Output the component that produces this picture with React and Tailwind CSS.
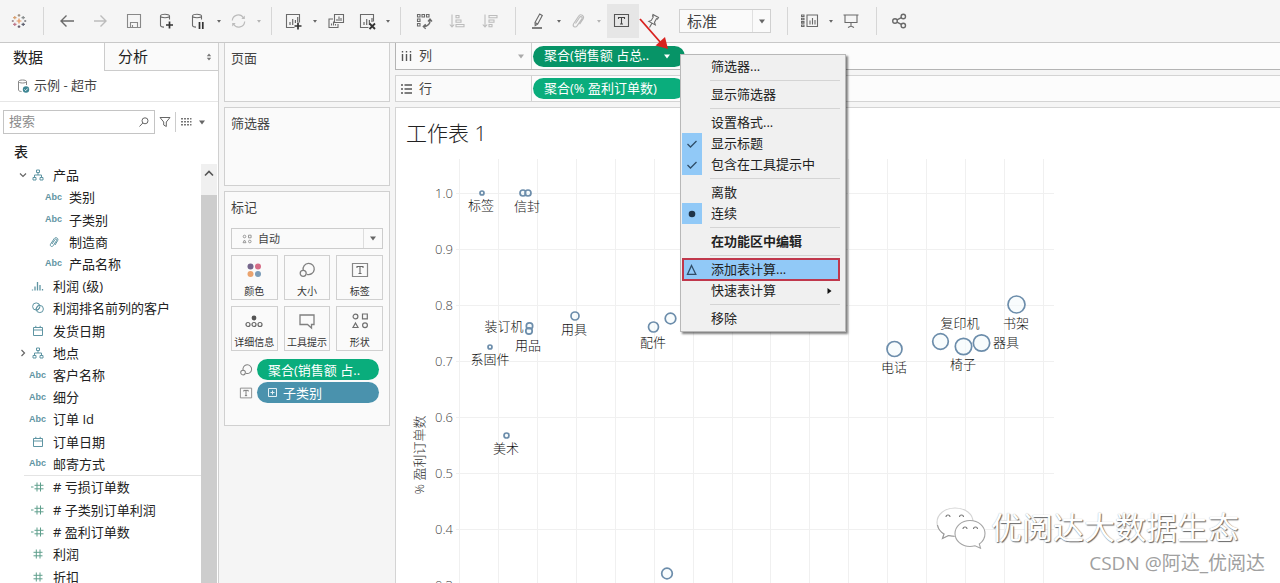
import React from "react";

/* ---------- small shared pieces ---------- */

function Caret({ className = "text-[#666]" }) {
  return (
    <svg viewBox="0 0 8 5" className={`h-[5px] w-2 shrink-0 ${className}`} aria-hidden="true">
      <path d="M1 0.5h6L4 4.5z" fill="currentColor" />
    </svg>
  );
}

function SmallCaret({ dim }) {
  return (
    <svg viewBox="0 0 8 5" className="h-[5px] w-2 shrink-0" aria-hidden="true">
      <path d="M2 1h4L4 3.8z" fill={dim ? "#b4b4b4" : "#666"} />
    </svg>
  );
}

function Icon({ children, dim }) {
  return (
    <svg
      viewBox="0 0 20 20"
      className="size-5 shrink-0"
      fill="none"
      stroke={dim ? "#bcbcbc" : "#6a6a6a"}
      strokeWidth="1.1"
      aria-hidden="true"
    >
      {children}
    </svg>
  );
}

function Tool({ label, children, dim }) {
  return (
    <button type="button" aria-label={label} className="flex h-8 w-[33px] shrink-0 items-center justify-center">
      <Icon dim={dim}>{children}</Icon>
    </button>
  );
}

function MenuTool({ label, children, dim }) {
  return (
    <button type="button" aria-label={label} className="flex h-8 w-10 shrink-0 items-center justify-between pl-1.5">
      <Icon dim={dim}>{children}</Icon>
      <SmallCaret dim={dim} />
    </button>
  );
}

function Divider({ className = "" }) {
  return (
    <span className={`flex w-4 shrink-0 justify-center ${className}`}>
      <span className="h-7 w-px bg-[#d6d6d6]" />
    </span>
  );
}

/* ---------- toolbar ---------- */

function Cross({ x, y, s, color }) {
  return <path d={`M${x - s} ${y}h${2 * s}M${x} ${y - s}v${2 * s}`} stroke={color} strokeWidth="1.2" />;
}

function Bars() {
  return <path d="M6 14v-3M8.700 14V8M11.400 14v-5M14 11V7" strokeWidth="1.2" />;
}

function Toolbar() {
  return (
    <header className="flex h-[43px] shrink-0 items-center border-b border-[#c8c8c8] bg-[#f5f5f5] pl-0.5">
      <Tool label="Tableau">
        <Cross x={10} y={10} s={2.4} color="#e5935c" />
        <Cross x={5.8} y={6.6} s={1.7} color="#d8a070" />
        <Cross x={14.2} y={6.6} s={1.7} color="#8a8f90" />
        <Cross x={5.8} y={13.4} s={1.7} color="#c0788a" />
        <Cross x={14.2} y={13.4} s={1.7} color="#5e6070" />
        <Cross x={10} y={4.4} s={1.3} color="#a09080" />
        <Cross x={10} y={15.600} s={1.3} color="#6c6070" />
        <Cross x={3.800} y={10} s={1.1} color="#a08a90" />
        <Cross x={16.200} y={10} s={1.1} color="#85858a" />
      </Tool>
      <Divider />
      <Tool label="后退">
        <path d="M16 10H3.500M8.500 4.500 3 10l5.500 5.500" strokeWidth="1.400" />
      </Tool>
      <Tool label="前进" dim>
        <path d="M3 10h12M9.500 4.500 15 10l-5.500 5.500" strokeWidth="1.400" />
      </Tool>
      <Tool label="保存">
        <path d="M3.500 3.500h13v13h-13zM6.500 16.500v-5h7v5M8.500 16.500v-2.500" stroke="#888" />
      </Tool>
      <Tool label="新建数据源">
        <path d="M12.500 8.500V5c0-1-2-1.700-4.500-1.700S3.500 4 3.500 5v9.500c0 1 1.500 1.500 3.500 1.600M3.500 5c0 1 2 1.700 4.500 1.700S12.500 6 12.500 5" />
        <path d="M9 14h7M12.500 10.500v7" stroke="#333" strokeWidth="1.700" />
      </Tool>
      <MenuTool label="暂停自动更新">
        <path d="M12.500 8.500V5c0-1-2-1.700-4.500-1.700S3.500 4 3.500 5v9.500c0 1 1.500 1.500 3.500 1.600M3.500 5c0 1 2 1.700 4.500 1.700S12.500 6 12.500 5" />
        <path d="M10.500 11v7M13.800 11v7" stroke="#333" strokeWidth="1.700" />
      </MenuTool>
      <MenuTool label="运行更新" dim>
        <path d="M3.300 9.500A6 6 0 0 1 14.500 7M15.700 10.500A6 6 0 0 1 4.500 13" strokeWidth="1.200" />
        <path d="M15.800 4.500v3.500h-3.500zM3.200 15.500V12h3.500z" fill="#bcbcbc" stroke="none" />
      </MenuTool>
      <Divider />
      <MenuTool label="新建工作表">
        <path d="M9.500 16.500h-8v-13h13v8" />
        <path d="M5 14v-3M7.700 14V8M10.400 12V9M12.700 11V6" strokeWidth="1.200" />
        <path d="M9.500 15h7M13 11.500v7" stroke="#333" strokeWidth="1.700" />
      </MenuTool>
      <Tool label="复制">
        <path d="M8.500 3.500h9v8h-9zM7 8H3v8.500h9V13" />
        <path d="M11 10V8M13 10V5.500M15 10V7M5.500 14.500v-2M7.500 14.500v-4M9.500 14.500v-1.500" />
      </Tool>
      <MenuTool label="清除工作表">
        <path d="M10.500 16.500h-8v-13h13v7" />
        <Bars />
        <path d="m11.500 12.500 5.500 5.500M17 12.500 11.500 18" stroke="#333" strokeWidth="1.800" />
      </MenuTool>
      <Divider />
      <Tool label="交换行和列">
        <path d="M2.500 3.500h2.500v2.500h-2.500zM7 3.500h2.500v2.500H7zM11.500 3.500H14v2.500h-2.500zM2.500 8h2.500v2.500h-2.500zM2.500 12.500h2.500V15h-2.500z" />
        <path d="M15 8.500c.5 4-2 7-6.500 7M13 10.500l2-2.500 2 2.500M10.700 13.200l-2.400 2.300 2.400 2.200" strokeWidth="1.300" />
      </Tool>
      <Tool label="升序排序" dim>
        <path d="M4 3.500v12.500M1.800 13.500 4 16l2.200-2.500M8 4.500h3v2.200H8zM8 9h5v2.200H8zM8 13.500h8v2.200H8z" />
      </Tool>
      <Tool label="降序排序" dim>
        <path d="M4 3.500v12.500M1.800 13.500 4 16l2.200-2.500M8 4.500h8v2.200H8zM8 9h5v2.200H8zM8 13.500h3v2.200H8z" />
      </Tool>
      <Divider />
      <MenuTool label="突出显示">
        <path d="m6 11.500 4.700-8.500 2.600 1.500-4.600 8.500-2.500 1.500zM6 11.500l2.700 1.500" />
        <path d="M3 17h10" strokeWidth="1.700" />
      </MenuTool>
      <MenuTool label="组成员" dim>
        <path d="m6.500 12.500 4.200-6.200c1-1.600 3.200-.2 2.200 1.400l-4.800 7.200c-1.800 2.400-5 .4-3.500-2.200l5-7.500c1.800-3 6.300-.4 4.500 2.700l-3.500 5.300" />
      </MenuTool>
      <button
        type="button"
        aria-label="显示标记标签"
        className="ml-1 flex h-[34px] w-8 shrink-0 items-center justify-center bg-[#e6e6e6]"
      >
        <Icon>
          <path d="M1.500 3.500h14v12h-14z" stroke="#555" />
          <path d="M5.500 8V6.500h6V8M8.500 6.500v6.500M7 13h3" stroke="#444" strokeWidth="1.100" />
        </Icon>
      </button>
      <button type="button" aria-label="固定轴" className="flex h-8 w-7 shrink-0 items-center justify-center">
        <Icon>
          <path d="m10 3.500 5.500 3-1 1.500-1-.3-2 3.500.8 2.800-6.500-3.600 2.500-1 2-3.500-.8-.9zM8.800 12.500 6.500 16.500" />
        </Icon>
      </button>
      <div className="ml-3 flex h-6 w-[92px] shrink-0 items-center border border-[#d0d0d0] bg-[#fafafa]">
        <select
          aria-label="视图适合方式"
          defaultValue="标准"
          className="h-full min-w-0 flex-1 appearance-none bg-transparent pl-[7px] text-[15px] text-[#444]"
        >
          <option>标准</option>
        </select>
        <span className="flex h-full w-[18px] items-center justify-center border-l border-[#e0e0e0]">
          <Caret />
        </span>
      </div>
      <Divider className="ml-2" />
      <MenuTool label="显示/隐藏功能区">
        <path d="M6 4h10.500v11.500H6zM9 13.500v-4M11.500 13.500V7M14 13.500V9" />
        <path d="M.5 4H3v1.500H.5zM.5 7.300H3v1.500H.5zM.5 10.600H3v1.500H.5zM.5 14H3v1.500H.5z" />
      </MenuTool>
      <Tool label="演示模式">
        <path d="M1.500 4h15M3 4v7.500h12V4M9 11.500v4M6 16.500l3-1.500 3 1.500" />
      </Tool>
      <Divider />
      <Tool label="共享">
        <circle cx="4" cy="10" r="2.300" strokeWidth="1.400" />
        <circle cx="12.300" cy="5.500" r="2.200" strokeWidth="1.400" />
        <circle cx="12.300" cy="14.500" r="2.200" strokeWidth="1.400" />
        <path d="m6 8.900 4.300-2.300M6 11.100l4.300 2.300" strokeWidth="1.300" />
      </Tool>
    </header>
  );
}

/* ---------- data pane ---------- */

function FieldIcon({ type }) {
  if (type === "abc") {
    return (
      <span className="font-['Liberation_Sans',sans-serif] text-[9px] leading-none font-bold text-[#5f95a3]">Abc</span>
    );
  }
  const paths = {
    tree: <path d="M5.500 2h3v2.500h-3zM2 9.500h3v2.500H2zM9 9.500h3v2.500H9zM7 4.500V7M3.500 9.500V7h7v2.500" />,
    clip: <path d="m5 9 3-4.500c.8-1.200 2.300-.2 1.600 1L6.200 10.700c-1.300 1.800-3.700.3-2.600-1.600l3.600-5.500c1.500-2.200 4.800-.2 3.400 2.100L8 10" />,
    hist: <path d="M1.500 11.500v-1M4 11.500v-4M6.500 11.500V3M9 11.500V6M11.500 11.500v-1.500" strokeWidth="1.300" />,
    set: (
      <>
        <circle cx="5.200" cy="5.500" r="3.600" />
        <circle cx="8.800" cy="8" r="3.600" />
        <path d="M4.500 8.500 8 3.500M6.500 9.500l2.500-3.500" />
      </>
    ),
    date: <path d="M2.500 3.500h9v8h-9zM2.500 6h9M4.800 1.800v2M9.200 1.800v2" />,
    num: <path d="M5.300 2.500v9M9 2.500v9M2.500 5.300h9M2.500 8.800h9" />,
    calc: <path d="M6 2.500v9M9.500 2.500v9M3.500 5.300h9M3.500 8.800h9M0 7h2.500" />,
  };
  const green = type === "num" || type === "calc";
  return (
    <svg
      viewBox="0 0 14 14"
      className="size-3.5"
      fill="none"
      stroke={green ? "#5f9f8c" : "#5f95a3"}
      strokeWidth="1"
      aria-hidden="true"
    >
      {paths[type]}
    </svg>
  );
}

const dimensions = [
  { name: "产品", type: "tree", arrow: "down" },
  { name: "类别", type: "abc", nested: true },
  { name: "子类别", type: "abc", nested: true },
  { name: "制造商", type: "clip", nested: true },
  { name: "产品名称", type: "abc", nested: true },
  { name: "利润 (级)", type: "hist" },
  { name: "利润排名前列的客户", type: "set" },
  { name: "发货日期", type: "date" },
  { name: "地点", type: "tree", arrow: "right" },
  { name: "客户名称", type: "abc" },
  { name: "细分", type: "abc" },
  { name: "订单 Id", type: "abc" },
  { name: "订单日期", type: "date" },
  { name: "邮寄方式", type: "abc" },
];

const measures = [
  { name: "# 亏损订单数", type: "calc" },
  { name: "# 子类别订单利润", type: "calc" },
  { name: "# 盈利订单数", type: "calc" },
  { name: "利润", type: "num" },
  { name: "折扣", type: "num" },
];

function Field({ name, type, nested, arrow }) {
  return (
    <li className={`flex items-center ${nested ? "pl-8" : "pl-4"}`}>
      <span className="flex w-3.5 justify-center">
        {arrow && (
          <svg viewBox="0 0 8 8" className="size-2" fill="none" stroke="#666" strokeWidth="1.2" aria-hidden="true">
            <path d={arrow === "down" ? "M1 2.500 4 5.500 7 2.500" : "M2.500 1 5.500 4 2.500 7"} />
          </svg>
        )}
      </span>
      <span className="flex w-[15px] justify-center">
        <FieldIcon type={type} />
      </span>
      <span className="pl-2 whitespace-nowrap">{name}</span>
    </li>
  );
}

function DataPane() {
  return (
    <aside className="flex w-[219px] shrink-0 flex-col border-r border-[#d0d0d0] bg-white">
      <div className="flex h-7 shrink-0 text-[15px] text-[#222]" role="tablist">
        <button type="button" role="tab" aria-selected="true" className="w-[104px] pl-[13px] text-left">
          数据
        </button>
        <button
          type="button"
          role="tab"
          aria-selected="false"
          className="flex flex-1 items-center justify-between border-b border-l border-[#ccc] bg-[#fafafa] pr-1.5 pl-[13px]"
        >
          分析
          <svg viewBox="0 0 6 8" className="h-2 w-1.5" fill="#777" aria-hidden="true">
            <path d="M3 0.500 5.200 3.300H.8zM3 7.500.8 4.700h4.400z" />
          </svg>
        </button>
      </div>
      <div className="flex h-[31px] shrink-0 items-center gap-1 border-b border-[#e6e6e6] pl-4 text-[13px] text-[#444]">
        <svg viewBox="0 0 14 16" className="h-4 w-3.5" fill="none" stroke="#888" aria-hidden="true">
          <path d="M10.500 7V3.500c0-.9-1.800-1.500-4-1.500s-4 .6-4 1.500v8.500c0 .8 1.200 1.400 3 1.500M2.500 3.500c0 .9 1.800 1.500 4 1.500s4-.6 4-1.500" />
          <circle cx="10" cy="11.500" r="3.200" fill="#3f8794" stroke="none" />
          <path d="m8.500 11.500 1.200 1.200 2-2.200" stroke="#fff" strokeWidth=".9" />
        </svg>
        示例 - 超市
      </div>
      <div className="mt-2 flex h-6 shrink-0 items-center pl-[3px]">
        <label className="flex h-full w-[152px] items-center border border-[#c4c4c4] pr-1 pl-[5px]">
          <input
            aria-label="搜索"
            placeholder="搜索"
            className="min-w-0 flex-1 bg-transparent text-[13px] outline-none placeholder:text-[#8c8c8c]"
          />
          <svg viewBox="0 0 12 12" className="size-3" fill="none" stroke="#666" aria-hidden="true">
            <circle cx="7" cy="4.800" r="3" />
            <path d="M4.800 7 1.500 10.500" />
          </svg>
        </label>
        <button type="button" aria-label="筛选" className="flex w-5 justify-center">
          <svg viewBox="0 0 12 12" className="size-3" fill="none" stroke="#666" aria-hidden="true">
            <path d="M1 1.500h10L7.300 6v4.500L4.700 9V6z" />
          </svg>
        </button>
        <span className="h-5 w-px bg-[#ccc]" />
        <button type="button" aria-label="视图选项" className="flex items-center gap-1.5 pl-1">
          <svg viewBox="0 0 12 12" className="size-3" fill="#777" aria-hidden="true">
            <path d="M1 2h2v1.500H1zM4 2h2v1.500H4zM7 2h2v1.500H7zM10 2h1.500v1.500H10zM1 5h2v1.500H1zM4 5h2v1.500H4zM7 5h2v1.500H7zM10 5h1.500v1.500H10zM1 8h2v1.500H1zM4 8h2v1.500H4zM7 8h2v1.500H7zM10 8h1.500v1.500H10z" />
          </svg>
          <Caret />
        </button>
      </div>
      <h2 className="mt-1.5 h-6 shrink-0 pl-3.5 text-sm leading-6 font-medium text-[#222]">表</h2>
      <div className="flex min-h-0 flex-1 overflow-hidden text-[13px] leading-5 text-[#222]">
        <div className="min-w-0 flex-1">
          <ul className="grid h-[311px] auto-rows-fr">
            {dimensions.map((f) => (
              <Field key={f.name} {...f} />
            ))}
          </ul>
          <hr className="ml-6 border-[#e4e4e4]" />
          <ul className="grid h-28 auto-rows-fr">
            {measures.map((f) => (
              <Field key={f.name} {...f} />
            ))}
          </ul>
        </div>
        <div className="mr-px flex w-4 flex-col bg-[#cdcdcd]">
          <button type="button" aria-label="向上滚动" className="flex h-[31px] justify-center bg-[#f0f0f0] pt-1.5">
            <svg viewBox="0 0 10 7" className="h-[7px] w-2.5" fill="none" stroke="#555" strokeWidth="1.600" aria-hidden="true">
              <path d="M1 5.500 5 1.500l4 4" />
            </svg>
          </button>
        </div>
      </div>
    </aside>
  );
}

/* ---------- cards ---------- */

function LabelGlyph({ className }) {
  return (
    <svg viewBox="0 0 18 16" className={className} fill="none" stroke="#888" aria-hidden="true">
      <path d="M1.500 1.500h15v13h-15z" strokeWidth="1.200" />
      <path d="M6 6V4.500h6V6M9 4.500v7M7.500 11.500h3" stroke="#666" strokeWidth="1.100" />
    </svg>
  );
}

function SizeGlyph({ className }) {
  return (
    <svg viewBox="0 0 18 18" className={className} fill="none" stroke="#808080" strokeWidth="1.300" aria-hidden="true">
      <path d="M5.200 9.200A5.600 5.600 0 1 1 9 13.300" />
      <circle cx="5.200" cy="12.300" r="3" />
    </svg>
  );
}

const markButtons = [
  {
    label: "颜色",
    icon: (
      <svg viewBox="0 0 18 18" className="size-[18px]" aria-hidden="true">
        <circle cx="5.500" cy="5.500" r="3" fill="#75668c" />
        <circle cx="13" cy="5.500" r="3" fill="#d66c87" />
        <circle cx="5.500" cy="13" r="3" fill="#eaa36e" />
        <circle cx="13" cy="13" r="3" fill="#7b9cb8" />
      </svg>
    ),
  },
  { label: "大小", icon: <SizeGlyph className="size-[18px]" /> },
  { label: "标签", icon: <LabelGlyph className="h-4 w-[18px]" /> },
  {
    label: "详细信息",
    icon: (
      <svg viewBox="0 0 18 18" className="size-[18px]" fill="none" stroke="#666" strokeWidth="1.200" aria-hidden="true">
        <circle cx="9" cy="6" r="2.400" fill="#555" stroke="none" />
        <circle cx="3" cy="12.500" r="2" />
        <circle cx="9" cy="12.500" r="2" />
        <circle cx="15" cy="12.500" r="2" />
      </svg>
    ),
  },
  {
    label: "工具提示",
    icon: (
      <svg viewBox="0 0 18 18" className="size-[18px]" fill="none" stroke="#808080" strokeWidth="1.300" aria-hidden="true">
        <path d="M2 3h14v9.500h-2.500v3.500l-4-3.500H2z" />
      </svg>
    ),
  },
  {
    label: "形状",
    icon: (
      <svg viewBox="0 0 18 18" className="size-[18px]" fill="none" stroke="#707070" strokeWidth="1.200" aria-hidden="true">
        <circle cx="4.500" cy="4.500" r="2.400" />
        <path d="M11.500 2h4.800v4.800h-4.800zM4.500 11 7 15.500H2z" />
        <circle cx="14" cy="13.300" r="2.400" />
      </svg>
    ),
  },
];

function Cards() {
  return (
    <div className="flex w-[176px] shrink-0 flex-col gap-[5px] px-[5px] text-[13px] leading-5 text-[#444]">
      <section className="h-[59px] border border-t-0 border-[#d0d0d0] bg-[#fafafa] px-1.5 py-[5px]">
        <h2>页面</h2>
      </section>
      <section className="h-[79px] border border-[#d0d0d0] bg-[#fafafa] px-1.5 py-[5px]">
        <h2>筛选器</h2>
      </section>
      <section className="border border-[#d0d0d0] bg-[#fafafa] px-1.5 pt-[5px] pb-[22px]">
        <h2>标记</h2>
        <div className="mt-[11px] flex h-[21px] items-center border border-[#ccc]">
          <svg viewBox="0 0 10 10" className="ml-2.5 size-2.5" fill="none" stroke="#999" aria-hidden="true">
            <circle cx="2.500" cy="2.500" r="1.300" />
            <path d="M6.500 1.200h2.600v2.600H6.500zM2.500 6 4 8.700H1z" />
            <circle cx="7.800" cy="7.500" r="1.300" />
          </svg>
          <select
            aria-label="标记类型"
            defaultValue="自动"
            className="h-full min-w-0 flex-1 appearance-none bg-transparent pl-1.5 text-[11px]"
          >
            <option>自动</option>
          </select>
          <span className="flex h-full w-[19px] items-center justify-center border-l border-[#ddd]">
            <Caret />
          </span>
        </div>
        <div className="mt-1.5 grid grid-cols-3 gap-1.5">
          {markButtons.map((b) => (
            <button
              key={b.label}
              type="button"
              className="flex h-[45px] flex-col items-center justify-end border border-[#d0d0d0] text-[10px] leading-4 whitespace-nowrap text-[#333]"
            >
              <span className="flex h-[18px] items-center">{b.icon}</span>
              <span className="mt-1">{b.label}</span>
            </button>
          ))}
        </div>
        <ul className="mt-2 flex flex-col gap-0.5 text-white">
          <li className="flex h-[21px] items-center gap-1 pr-1 pl-2">
            <SizeGlyph className="size-3.5" />
            <span className="flex h-full flex-1 items-center rounded-full bg-[#0aad7c] pl-[11px] whitespace-nowrap">
              聚合(销售额 占..
            </span>
          </li>
          <li className="flex h-[21px] items-center gap-1 pr-1 pl-2">
            <LabelGlyph className="h-3 w-3.5" />
            <span className="flex h-full flex-1 items-center gap-1.5 rounded-full bg-[#4a92ad] pl-[11px]">
              <svg viewBox="0 0 9 9" className="size-[9px]" fill="none" stroke="#e4f0f5" aria-hidden="true">
                <path d="M.5.500h8v8h-8zM2.500 4.500h4M4.500 2.500v4" />
              </svg>
              子类别
            </span>
          </li>
        </ul>
      </section>
    </div>
  );
}

/* ---------- context menu ---------- */

const menuItems = [
  { label: "筛选器..." },
  null,
  { label: "显示筛选器" },
  null,
  { label: "设置格式..." },
  { label: "显示标题", mark: "check" },
  { label: "包含在工具提示中", mark: "check" },
  null,
  { label: "离散" },
  { label: "连续", mark: "dot" },
  null,
  { label: "在功能区中编辑", bold: true },
  null,
  { label: "添加表计算...", mark: "delta", active: true },
  { label: "快速表计算", submenu: true },
  null,
  { label: "移除" },
];

function MenuMark({ mark }) {
  return (
    <span
      className={`flex h-full w-5 shrink-0 items-center justify-center ${
        mark === "check" || mark === "dot" ? "bg-[#91c9f7]" : ""
      }`}
    >
      {mark && (
        <svg viewBox="0 0 12 12" className="size-3" fill="none" stroke="#2f4d68" strokeWidth="1.300" aria-hidden="true">
          {mark === "check" && <path d="m1.500 6 3 3L10.500 3" />}
          {mark === "dot" && <circle cx="6" cy="6" r="3.300" fill="#1f3448" stroke="none" />}
          {mark === "delta" && <path d="M5.500 1.500 9.800 10.300H1.500z" />}
        </svg>
      )}
    </span>
  );
}

function ContextMenu() {
  return (
    <div
      role="menu"
      className="absolute top-[54px] left-[680px] z-10 w-[166px] border border-[#b8b8b8] bg-[#f0f0f0] px-px pt-px pb-0.5 text-[13px] text-[#222] shadow-[2px_2px_2px_rgba(0,0,0,0.5)]"
    >
      {menuItems.map((item, i) =>
        item ? (
          <div key={item.label} className={item.active ? "pr-1" : ""}>
            <button
              type="button"
              role="menuitem"
              className={`relative flex h-[21px] w-full items-center whitespace-nowrap ${item.active ? "bg-[#91c9f7]" : ""}`}
            >
              <MenuMark mark={item.mark} />
              <span className={`flex-1 pl-[9px] text-left ${item.bold ? "font-bold" : ""}`}>{item.label}</span>
              {item.submenu && (
                <svg viewBox="0 0 5 8" className="mr-3 h-2 w-[5px]" fill="#111" aria-hidden="true">
                  <path d="M.5 1 4.500 4l-4 3z" />
                </svg>
              )}
              {item.active && <span className="absolute inset-x-0 -inset-y-px border-2 border-[#c0384c]" />}
            </button>
          </div>
        ) : (
          <div key={i} className="flex h-[7px] items-center pr-1 pl-7">
            <span className="h-px flex-1 bg-[#d4d4d4]" />
          </div>
        )
      )}
    </div>
  );
}

/* ---------- worksheet ---------- */

const points = [
  [482, 193, 2], [523, 193, 3], [528, 193, 3], [575, 316, 4], [653.5, 327, 5], [670.5, 318.5, 5.3],
  [529.5, 326, 3.2], [529, 331, 3.2], [490, 347, 2], [506.5, 435.5, 2.5], [667, 573.5, 5.3],
  [894.5, 349, 7.5], [940.5, 341.5, 7.8], [963.5, 346.5, 8.2], [981.5, 343, 8.2], [1016.5, 304.5, 8.5],
];

const labels = [
  ["标签", 481, 205], ["信封", 527, 206], ["装订机", 504, 326], ["用品", 528, 345], ["用具", 574, 329],
  ["配件", 653, 342], ["系固件", 490, 359], ["美术", 506, 448], ["电话", 894, 367], ["复印机", 960, 323],
  ["椅子", 963, 364], ["书架", 1016, 323], ["器具", 1006, 342],
];

const ticks = ["1.0", "0.9", "0.8", "0.7", "0.6", "0.5", "0.4", "0.3"];
const gridXs = Array.from({ length: 16 }, (_, i) => Math.round(459 + i * 38.93) + 0.5);

function Chart() {
  return (
    <svg
      viewBox="396 158 664 432"
      width="664"
      height="432"
      className="block shrink-0 font-['Open_Sans','Noto_Sans_CJK_SC',sans-serif] text-[13px] font-light"
      role="img"
      aria-label="% 盈利订单数"
    >
      <g stroke="#f0f0f0">
        {gridXs.map((x) => (
          <path key={x} d={`M${x} 159V590`} />
        ))}
        {ticks.map((t, i) => (
          <path key={t} d={`M456 ${193.5 + i * 56}H1054`} />
        ))}
      </g>
      <g fill="#444" textAnchor="end">
        {ticks.map((t, i) => (
          <text key={t} x="453" y={198 + i * 56}>{t}</text>
        ))}
      </g>
      <text transform="translate(424 455) rotate(-90)" textAnchor="middle" fill="#333">% 盈利订单数</text>
      <g fill="#f2f9fc" fillOpacity="0.5" stroke="#6c8dab" strokeWidth="1.7">
        {points.map(([x, y, r], i) => (
          <circle key={i} cx={x} cy={y} r={r} />
        ))}
      </g>
      <g fill="#111" textAnchor="middle">
        {labels.map(([t, x, y]) => (
          <text key={t} x={x} y={y + 5}>{t}</text>
        ))}
      </g>
    </svg>
  );
}

function Shelf({ label, icon, caret, strong, children }) {
  return (
    <section
      className={`flex h-[27px] shrink-0 border border-r-0 bg-[#fcfcfc] ${
        strong ? "border-t-0 border-[#b4b4b4]" : "border-[#d4d4d4]"
      }`}
    >
      <div className="flex w-[136px] shrink-0 items-center gap-1.5 border-r border-[#d0d0d0] bg-[#fafafa] pr-1.5 pl-[5px] text-[13px] text-[#444]">
        <svg viewBox="0 0 12 12" className="size-3" fill="none" stroke="#555" strokeWidth="1.4" aria-hidden="true">
          <path d={icon} />
        </svg>
        <h2 className="flex-1">{label}</h2>
        {caret && <Caret className="text-[#aaa]" />}
      </div>
      <div className="flex flex-1 items-center pl-px">{children}</div>
    </section>
  );
}

function Worksheet() {
  return (
    <main className="flex min-w-0 flex-1 flex-col gap-[5px]">
      <Shelf label="列" icon="M1.500 1v1.500M5.500 1v1.500M9.500 1v1.500M1.500 4v7M5.500 4v7M9.500 4v7" caret strong>
        <button
          type="button"
          className="flex h-[21px] w-[152px] items-center justify-between rounded-full bg-[#079467] pr-3.5 pl-[11px] text-[13px] whitespace-nowrap text-white"
        >
          聚合(销售额 占总..
          <Caret className="text-white" />
        </button>
      </Shelf>
      <Shelf label="行" icon="M0 2h2M0 6h2M0 10h2M3.500 2H11M3.500 6H11M3.500 10H11">
        <button
          type="button"
          className="flex h-[21px] w-[152px] items-center rounded-full bg-[#0aad7c] pl-[11px] text-[13px] whitespace-nowrap text-white"
        >
          聚合(% 盈利订单数)
        </button>
      </Shelf>
      <section className="min-h-0 flex-1 overflow-hidden border-t border-l border-[#d4d4d4] bg-white">
        <h1 className="h-[50px] pl-2.5 text-[21px] leading-[50px] font-light text-[#222]">工作表 1</h1>
        <Chart />
      </section>
    </main>
  );
}

/* ---------- overlays ---------- */

function Watermark() {
  return (
    <div className="pointer-events-none absolute right-[15px] bottom-1.5 flex flex-col items-end">
      <div className="mr-[26px] flex items-center gap-1">
        <svg viewBox="0 0 52 44" className="h-11 w-[52px]" fill="#fff" stroke="#a4a4a4" strokeWidth="1.1" aria-hidden="true">
          <path
            d="M20 3C9.500 3 2 9.500 2 17.500c0 5 2.600 9 7 11.500L7.500 33.500l6-3c2 .6 4.200 1 6.500 1 10.500 0 18-6.500 18-14.500S30.500 3 20 3z"
            stroke="#d4d4d4"
          />
          <path d="M2.500 20c.8 4 3 7 6.500 9L7.500 33.500l6-3c2 .5 4 .8 6 .8" fill="none" stroke="#999" />
          <path d="M35 15.500c-8.500 0-15 5.800-15 13s6.500 13 15 13c1.800 0 3.500-.3 5-.7l5.500 2.400-1.200-4.200c3.500-2.400 5.700-6.200 5.700-10.500 0-7.200-6.500-13-15-13z" />
          <path d="M11 12a2 2 0 0 1 4 0M24.500 12a2 2 0 0 1 4 0M28 24a2 2 0 0 1 4 0M38.500 24a2 2 0 0 1 4 0" fill="none" stroke="#777" />
        </svg>
        <span className="text-[31px] leading-10 text-white [text-shadow:1px_1px_1px_#666,0_0_1px_#aaa]">
          优阅达大数据生态
        </span>
      </div>
      <span className="text-[19px] leading-7 text-[#a0a0a0]">CSDN @阿达_优阅达</span>
    </div>
  );
}

export default function App() {
  return (
    <div className="relative flex h-screen flex-col overflow-hidden bg-[#f5f5f5] font-['Open_Sans','Noto_Sans_CJK_SC',sans-serif]">
      <Toolbar />
      <div className="flex min-h-0 flex-1">
        <DataPane />
        <Cards />
        <Worksheet />
      </div>
      <ContextMenu />
      <svg viewBox="0 0 30 36" className="pointer-events-none absolute top-4 left-[638px] z-20 h-9 w-[30px]" aria-hidden="true">
        <path d="M2 3 23 27" stroke="#d8221f" strokeWidth="1.8" />
        <path d="M30 33 17.500 29.500 27 21z" fill="#d8221f" />
      </svg>
      <Watermark />
    </div>
  );
}
